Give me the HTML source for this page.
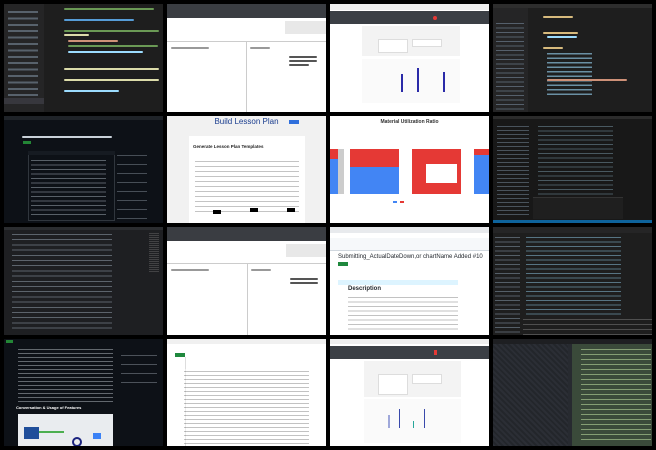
<!DOCTYPE html>
<html><head><style>
*{margin:0;padding:0;box-sizing:border-box}
body{width:656px;height:450px;background:#000;position:relative;overflow:hidden;font-family:"Liberation Sans",sans-serif}
.c{position:absolute;overflow:hidden}
.a{position:absolute}
.ln{position:absolute;height:2px;border-radius:1px}
</style></head><body>

<!-- R1C1 vscode dark -->
<div class="c" style="left:4px;top:4px;width:159px;height:108px;background:#1e1e1e">
 <div class="a" style="left:0;top:0;width:40px;height:108px;background:#252526"></div>
 <div class="a" style="left:0;top:94px;width:40px;height:6px;background:#37373d"></div>
 <div class="a" style="left:48px;top:0;width:10px;height:108px;background:#1e1e1e"></div>
 <div class="ln" style="left:60px;top:4px;width:90px;background:#6a9955"></div>
 <div class="ln" style="left:60px;top:15px;width:70px;background:#569cd6"></div>
 <div class="ln" style="left:60px;top:26px;width:95px;background:#6a9955"></div>
 <div class="ln" style="left:60px;top:30px;width:25px;background:#dcdcaa"></div>
 <div class="ln" style="left:64px;top:36px;width:50px;background:#ce9178"></div>
 <div class="ln" style="left:64px;top:41px;width:90px;background:#6a9955"></div>
 <div class="ln" style="left:64px;top:47px;width:75px;background:#9cdcfe"></div>
 <div class="ln" style="left:60px;top:64px;width:95px;background:#dcdcaa"></div>
 <div class="ln" style="left:60px;top:75px;width:95px;background:#dcdcaa"></div>
 <div class="ln" style="left:60px;top:86px;width:55px;background:#9cdcfe"></div>
</div>
<!-- generic light column lines in R1C1 sidebar -->
<div class="a" style="left:8px;top:8px;width:30px;height:90px;background:repeating-linear-gradient(#252526 0 3px,#7a8a9a 3px 5px,#252526 5px 6.4px);opacity:.6"></div>

<!-- R1C2 web form -->
<div class="c" style="left:167px;top:4px;width:159px;height:108px;background:#fff">
 <div class="a" style="left:0;top:0;width:159px;height:14px;background:#3a3d42"></div>
 <div class="a" style="left:0;top:17px;width:159px;height:13px;background:#e8e8e8"></div>
 <div class="a" style="left:0;top:17px;width:118px;height:13px;background:#fff"></div>
 <div class="a" style="left:0;top:37px;width:159px;height:1px;background:#ccc"></div>
 <div class="a" style="left:79px;top:38px;width:1px;height:70px;background:#ccc"></div>
 <div class="ln" style="left:4px;top:43px;width:38px;background:#999"></div>
 <div class="ln" style="left:83px;top:43px;width:20px;background:#999"></div>
 <div class="ln" style="left:122px;top:52px;width:28px;background:#555"></div>
 <div class="ln" style="left:122px;top:56px;width:28px;background:#555"></div>
 <div class="ln" style="left:122px;top:60px;width:20px;background:#555"></div>
</div>

<!-- R1C3 chart -->
<div class="c" style="left:330px;top:4px;width:159px;height:108px;background:#fff">
 <div class="a" style="left:0;top:0;width:159px;height:6px;background:#eee"></div>
 <div class="a" style="left:0;top:7px;width:159px;height:13px;background:#3b3f45"></div>
 <div class="a" style="left:103px;top:12px;width:4px;height:4px;border-radius:50%;background:#e53935"></div>
 <div class="a" style="left:32px;top:22px;width:98px;height:30px;background:#f3f3f3"></div>
 <div class="a" style="left:48px;top:35px;width:30px;height:14px;background:#fff;border:1px solid #ddd"></div>
 <div class="a" style="left:82px;top:35px;width:30px;height:8px;background:#fff;border:1px solid #ddd"></div>
 <div class="a" style="left:32px;top:55px;width:98px;height:44px;background:#fafafa"></div>
 <div class="a" style="left:71px;top:70px;width:2px;height:18px;background:#2a2aa8"></div>
 <div class="a" style="left:87px;top:64px;width:2px;height:24px;background:#2a2aa8"></div>
 <div class="a" style="left:113px;top:68px;width:2px;height:20px;background:#2a2aa8"></div>
</div>

<!-- R1C4 vscode -->
<div class="c" style="left:493px;top:4px;width:159px;height:108px;background:#1e1e1e">
 <div class="a" style="left:0;top:0;width:35px;height:108px;background:#252526"></div>
 <div class="a" style="left:0;top:0;width:159px;height:4px;background:#2d2d2d"></div>
 <div class="a" style="left:3px;top:16px;width:28px;height:90px;background:repeating-linear-gradient(#252526 0 3px,#6a7a8a 3px 4px,#252526 4px 4.5px);opacity:.7"></div>
 <div class="ln" style="left:50px;top:12px;width:30px;background:#d7ba7d"></div>
 <div class="ln" style="left:50px;top:28px;width:35px;background:#d7ba7d"></div>
 <div class="ln" style="left:54px;top:32px;width:30px;background:#9cdcfe"></div>
 <div class="ln" style="left:50px;top:43px;width:20px;background:#d7ba7d"></div>
 <div class="a" style="left:54px;top:47px;width:45px;height:45px;background:repeating-linear-gradient(#1e1e1e 0 2px,#9cdcfe 2px 3.5px,#1e1e1e 3.5px 4.5px);opacity:.6"></div>
 <div class="ln" style="left:54px;top:75px;width:80px;background:#ce9178"></div>
</div>

<!-- R2C1 github dark -->
<div class="c" style="left:4px;top:116px;width:159px;height:107px;background:#0d1117">
 <div class="a" style="left:0;top:0;width:159px;height:4px;background:#1f2328"></div>
 <div class="ln" style="left:18px;top:20px;width:90px;background:#c9d1d9"></div>
 <div class="a" style="left:19px;top:25px;width:8px;height:3px;background:#238636"></div>
 <div class="a" style="left:24px;top:35px;width:87px;height:70px;border:1px solid #30363d"></div>
 <div class="a" style="left:24px;top:35px;width:87px;height:4px;background:#161b22"></div>
 <div class="a" style="left:27px;top:42px;width:75px;height:60px;background:repeating-linear-gradient(#0d1117 0 2px,#8b949e 2px 3px,#0d1117 3px 4.5px);opacity:.6"></div>
 <div class="a" style="left:113px;top:35px;width:30px;height:70px;background:repeating-linear-gradient(#0d1117 0 4px,#6e7681 4px 5px,#0d1117 5px 9px);opacity:.6"></div>
</div>

<!-- R2C2 lesson plan -->
<div class="c" style="left:167px;top:116px;width:159px;height:107px;background:#f1f1f1">
 <div class="a" style="left:0;top:0;width:159px;height:14px;text-align:center;font-size:8px;color:#1a3d8f;line-height:12px">Build Lesson Plan</div>
 <div class="a" style="left:122px;top:4px;width:10px;height:4px;background:#2f6fdc"></div>
 <div class="a" style="left:22px;top:20px;width:116px;height:87px;background:#fff"></div>
 <div class="a" style="left:26px;top:28px;font-size:4.5px;font-weight:bold;color:#222">Generate Lesson Plan Templates</div>
 <div class="a" style="left:28px;top:42px;width:104px;height:55px;background:repeating-linear-gradient(#fff 0 3px,#aaa 3px 3.8px,#fff 3.8px 5px);opacity:.7"></div>
 <div class="a" style="left:46px;top:94px;width:8px;height:4px;background:#000"></div>
 <div class="a" style="left:83px;top:92px;width:8px;height:4px;background:#000"></div>
 <div class="a" style="left:120px;top:92px;width:8px;height:4px;background:#000"></div>
</div>

<!-- R2C3 stacked bar -->
<div class="c" style="left:330px;top:116px;width:159px;height:107px;background:#fff">
 <div class="a" style="left:0;top:3px;width:159px;text-align:center;font-size:5px;font-weight:bold;color:#333">Material Utilization Ratio</div>
 <div class="a" style="left:0;top:33px;width:8px;height:10px;background:#e53935"></div>
 <div class="a" style="left:0;top:43px;width:8px;height:35px;background:#4285f4"></div>
 <div class="a" style="left:8px;top:33px;width:6px;height:45px;background:#ccc"></div>
 <div class="a" style="left:20px;top:33px;width:49px;height:18px;background:#e53935"></div>
 <div class="a" style="left:20px;top:51px;width:49px;height:27px;background:#4285f4"></div>
 <div class="a" style="left:82px;top:33px;width:49px;height:45px;background:#e53935"></div>
 <div class="a" style="left:96px;top:48px;width:31px;height:19px;background:#fff"></div>
 <div class="a" style="left:144px;top:33px;width:15px;height:6px;background:#e53935"></div>
 <div class="a" style="left:144px;top:39px;width:15px;height:39px;background:#4285f4"></div>
 <div class="a" style="left:63px;top:85px;width:4px;height:2px;background:#4285f4"></div>
 <div class="a" style="left:70px;top:85px;width:4px;height:2px;background:#e53935"></div>
</div>

<!-- R2C4 vscode -->
<div class="c" style="left:493px;top:116px;width:159px;height:107px;background:#181818">
 <div class="a" style="left:0;top:0;width:159px;height:3px;background:#2b2b2b"></div>
 <div class="a" style="left:4px;top:8px;width:32px;height:92px;background:repeating-linear-gradient(#181818 0 2px,#6a7a8a 2px 3px,#181818 3px 4px);opacity:.6"></div>
 <div class="a" style="left:45px;top:8px;width:75px;height:72px;background:repeating-linear-gradient(#181818 0 2px,#7a9aaa 2px 3px,#181818 3px 4.5px);opacity:.5"></div>
 <div class="a" style="left:40px;top:81px;width:90px;height:22px;background:#1f1f1f;border-top:1px solid #333"></div>
 <div class="a" style="left:0;top:104px;width:159px;height:3px;background:#0e639c"></div>
</div>

<!-- R3C1 code dark -->
<div class="c" style="left:4px;top:227px;width:159px;height:108px;background:#1e1f22">
 <div class="a" style="left:0;top:0;width:159px;height:3px;background:#2b2d30"></div>
 <div class="a" style="left:8px;top:5px;width:100px;height:100px;background:repeating-linear-gradient(#1e1f22 0 2px,#a9b7c6 2px 3px,#1e1f22 3px 5.2px);opacity:.45"></div>
 <div class="a" style="left:145px;top:5px;width:10px;height:40px;background:repeating-linear-gradient(#1e1f22 0 1px,#666 1px 2px);opacity:.5"></div>
</div>

<!-- R3C2 web form -->
<div class="c" style="left:167px;top:227px;width:159px;height:108px;background:#fff">
 <div class="a" style="left:0;top:0;width:159px;height:14px;background:#3a3d42"></div>
 <div class="a" style="left:0;top:17px;width:159px;height:13px;background:#e8e8e8"></div>
 <div class="a" style="left:0;top:17px;width:119px;height:13px;background:#fff"></div>
 <div class="a" style="left:0;top:36px;width:159px;height:1px;background:#ccc"></div>
 <div class="a" style="left:80px;top:37px;width:1px;height:71px;background:#ccc"></div>
 <div class="ln" style="left:4px;top:42px;width:38px;background:#999"></div>
 <div class="ln" style="left:84px;top:42px;width:20px;background:#999"></div>
 <div class="ln" style="left:123px;top:51px;width:28px;background:#555"></div>
 <div class="ln" style="left:123px;top:55px;width:28px;background:#555"></div>
</div>

<!-- R3C3 github light -->
<div class="c" style="left:330px;top:227px;width:159px;height:108px;background:#fff">
 <div class="a" style="left:0;top:0;width:159px;height:6px;background:#e8eaed"></div>
 <div class="a" style="left:0;top:11px;width:159px;height:13px;background:#f6f8fa;border-bottom:1px solid #d0d7de"></div>
 <div class="a" style="left:8px;top:27px;font-size:6px;color:#24292f;white-space:nowrap">Submitting_ActualDateDown,or chartName Added #10</div>
 <div class="a" style="left:8px;top:35px;width:10px;height:4px;background:#1f883d"></div>
 <div class="a" style="left:8px;top:53px;width:120px;height:5px;background:#ddf4ff"></div>
 <div class="a" style="left:18px;top:59px;font-size:6px;font-weight:bold;color:#24292f">Description</div>
 <div class="a" style="left:18px;top:68px;width:110px;height:38px;background:repeating-linear-gradient(#fff 0 2px,#999 2px 3px,#fff 3px 4.5px);opacity:.6"></div>
</div>

<!-- R3C4 vscode -->
<div class="c" style="left:493px;top:227px;width:159px;height:108px;background:#1e1e1e">
 <div class="a" style="left:0;top:0;width:159px;height:6px;background:#252526"></div>
 <div class="a" style="left:2px;top:8px;width:25px;height:98px;background:repeating-linear-gradient(#1e1e1e 0 2px,#7a8a9a 2px 3px,#1e1e1e 3px 4.5px);opacity:.6"></div>
 <div class="a" style="left:33px;top:8px;width:95px;height:80px;background:repeating-linear-gradient(#1e1e1e 0 2px,#9cdcfe 2px 3px,#1e1e1e 3px 4.5px);opacity:.45"></div>
 <div class="a" style="left:30px;top:90px;width:129px;height:18px;background:repeating-linear-gradient(#1e1e1e 0 2px,#aaa 2px 3px,#1e1e1e 3px 5px);opacity:.35"></div>
</div>

<!-- R4C1 github dark -->
<div class="c" style="left:4px;top:339px;width:159px;height:107px;background:#0d1117">
 <div class="a" style="left:2px;top:1px;width:7px;height:3px;background:#238636"></div>
 <div class="a" style="left:14px;top:8px;width:95px;height:55px;background:repeating-linear-gradient(#0d1117 0 2px,#c9d1d9 2px 3px,#0d1117 3px 4px);opacity:.45"></div>
 <div class="a" style="left:12px;top:66px;font-size:4px;color:#fff;font-weight:bold">Conversation &amp; Usage of Features</div>
 <div class="a" style="left:14px;top:75px;width:95px;height:32px;background:#e9ecef"></div>
 <div class="a" style="left:20px;top:88px;width:15px;height:12px;background:#1f4e9a"></div>
 <div class="a" style="left:35px;top:92px;width:25px;height:2px;background:#4caf50"></div>
 <div class="a" style="left:68px;top:98px;width:10px;height:10px;border:2px solid #1a237e;border-radius:50%"></div>
 <div class="a" style="left:89px;top:94px;width:8px;height:6px;background:#3b82f6"></div>
 <div class="a" style="left:117px;top:12px;width:36px;height:40px;background:repeating-linear-gradient(#0d1117 0 4px,#8b949e 4px 5px,#0d1117 5px 9px);opacity:.5"></div>
</div>

<!-- R4C2 github light -->
<div class="c" style="left:167px;top:339px;width:159px;height:107px;background:#fff">
 <div class="a" style="left:0;top:0;width:159px;height:5px;background:#f0f0f0"></div>
 <div class="a" style="left:8px;top:14px;width:10px;height:4px;background:#1f883d"></div>
 <div class="a" style="left:18px;top:18px;width:120px;height:89px;border-left:1px solid #ddd"></div>
 <div class="a" style="left:17px;top:30px;width:125px;height:75px;background:repeating-linear-gradient(#fff 0 2px,#777 2px 3px,#fff 3px 4px);opacity:.45"></div>
</div>

<!-- R4C3 chart -->
<div class="c" style="left:330px;top:339px;width:159px;height:107px;background:#fff">
 <div class="a" style="left:0;top:0;width:159px;height:5px;background:#eee"></div>
 <div class="a" style="left:0;top:7px;width:159px;height:13px;background:#3b3f45"></div>
 <div class="a" style="left:104px;top:11px;width:3px;height:5px;background:#e53935"></div>
 <div class="a" style="left:34px;top:22px;width:97px;height:36px;background:#f3f3f3"></div>
 <div class="a" style="left:48px;top:35px;width:30px;height:21px;background:#fff;border:1px solid #ddd"></div>
 <div class="a" style="left:82px;top:35px;width:30px;height:10px;background:#fff;border:1px solid #ddd"></div>
 <div class="a" style="left:34px;top:60px;width:97px;height:44px;background:#fafafa"></div>
 <div class="a" style="left:58px;top:76px;width:2px;height:13px;background:#9fa8da"></div>
 <div class="a" style="left:69px;top:70px;width:1px;height:19px;background:#3949ab"></div>
 <div class="a" style="left:83px;top:82px;width:1px;height:7px;background:#26a69a"></div>
 <div class="a" style="left:94px;top:70px;width:1px;height:19px;background:#3949ab"></div>
</div>

<!-- R4C4 code green -->
<div class="c" style="left:493px;top:339px;width:159px;height:107px;background:#272a30">
 <div class="a" style="left:0;top:0;width:159px;height:5px;background:#1e1f22"></div>
 <div class="a" style="left:0;top:5px;width:75px;height:102px;background:repeating-linear-gradient(45deg,#2b2e35 0 2px,#23262b 2px 4px)"></div>
 <div class="a" style="left:79px;top:5px;width:80px;height:102px;background:#3a4a3a"></div>
 <div class="a" style="left:88px;top:8px;width:70px;height:95px;background:repeating-linear-gradient(#3a4a3a 0 2px,#b5d59b 2px 3px,#3a4a3a 3px 5px);opacity:.6"></div>
</div>

</body></html>
